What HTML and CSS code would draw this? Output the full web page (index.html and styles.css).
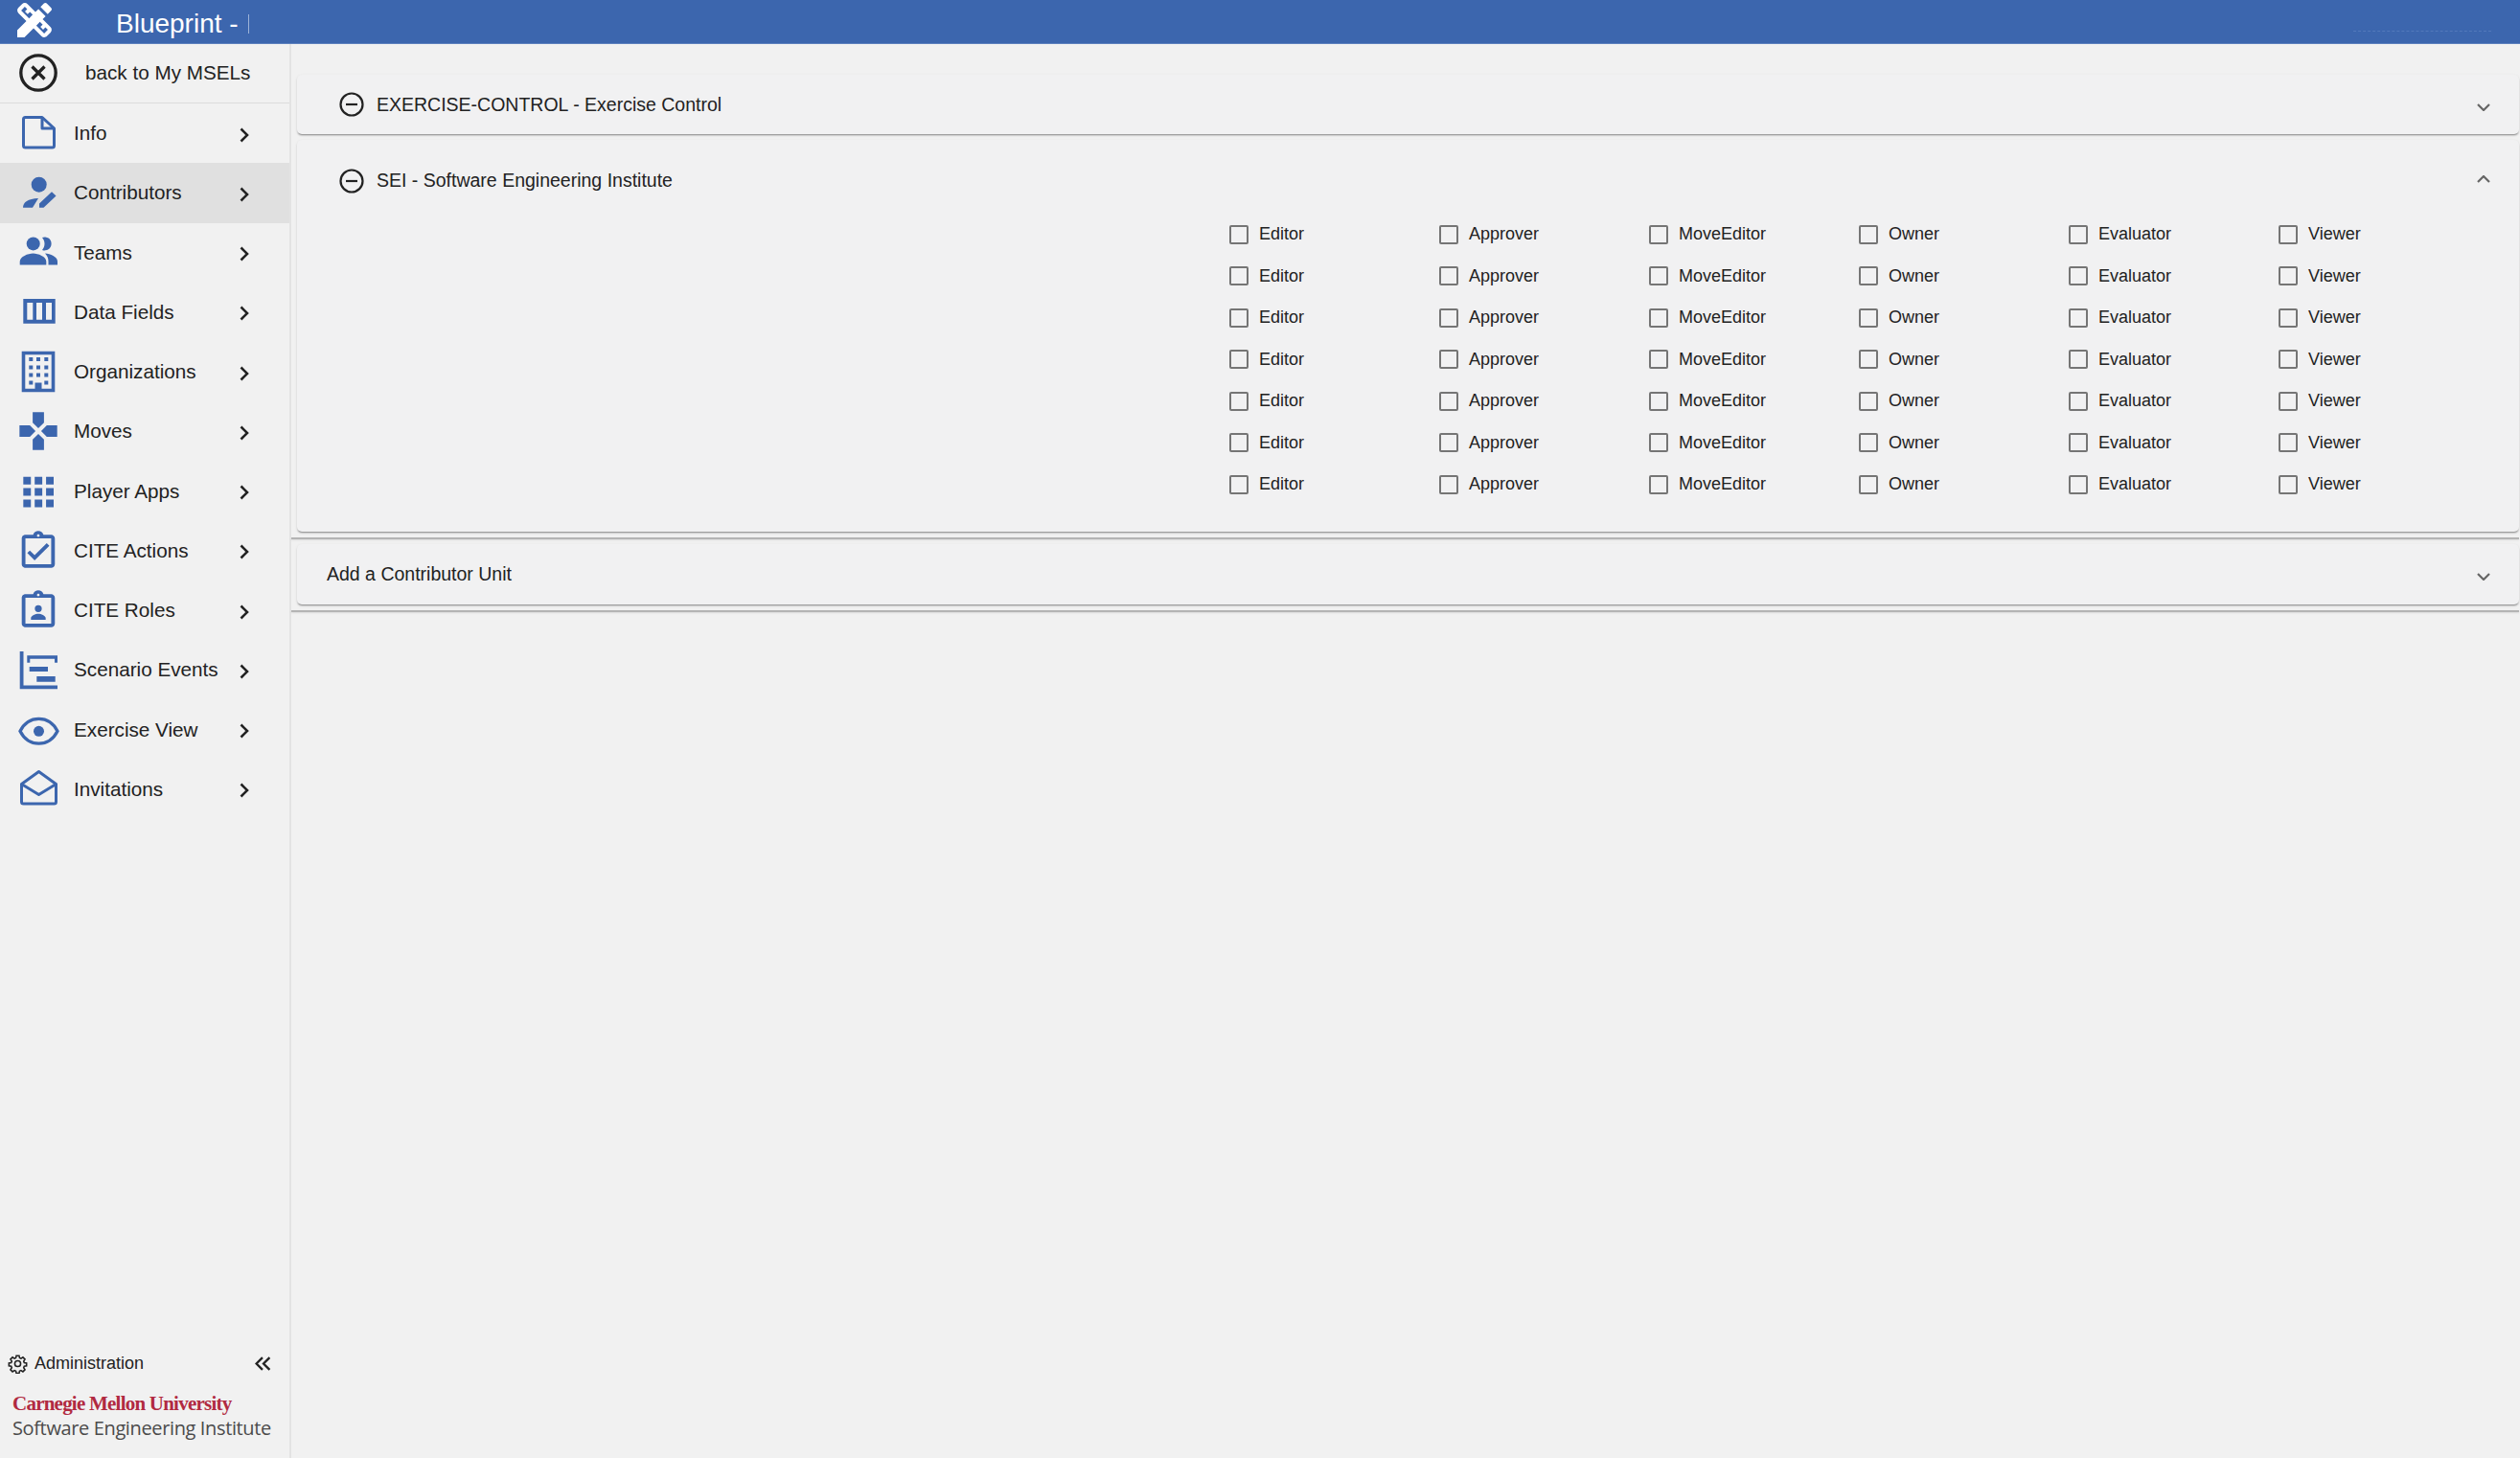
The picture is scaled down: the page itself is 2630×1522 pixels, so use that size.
FILE: index.html
```html
<!DOCTYPE html>
<html lang="en">
<head>
<meta charset="utf-8">
<title>Blueprint</title>
<link rel="stylesheet" href="styles.css">
</head>
<body>
<header class="topbar">
  <svg class="app-logo" viewBox="0 0 24 24"><path d="M16.24 11.51l1.57-1.57-3.75-3.75-1.57 1.57-4.14-4.13c-.78-.78-2.05-.78-2.83 0l-1.9 1.9c-.78.78-.78 2.05 0 2.83l4.13 4.13L3 17.25V21h3.75l4.76-4.76 4.13 4.13c.95.95 2.23.6 2.83 0l1.9-1.9c.78-.78.78-2.05 0-2.83l-4.13-4.13zm-7.06-.44L5.04 6.94l1.89-1.9L8.2 6.31 7.02 7.5l1.41 1.41 1.19-1.19 1.45 1.45-1.89 1.9zm7.88 7.89l-4.13-4.14 1.9-1.9 1.45 1.45-1.19 1.19 1.41 1.41 1.19-1.19 1.27 1.27-1.9 1.91zM20.71 7.04a.996.996 0 000-1.41l-2.34-2.34c-.47-.47-1.12-.29-1.41 0l-1.83 1.83 3.75 3.75 1.83-1.83z"/></svg>
  <span class="app-title">Blueprint -</span>
  <span class="caret"></span>
  <span class="faint-line"></span>
</header>
<div class="layout">
  <aside class="sidebar">
    <div class="back-row">
      <svg class="back-icon" viewBox="0 0 48 48"><circle cx="24" cy="24" r="18.2"/><path d="M17.5 17.5l13 13M30.5 17.5l-13 13"/></svg>
      <span>back to My MSELs</span>
    </div>
    <nav class="nav">
      <a class="nav-item"><svg class="nav-icon line" viewBox="0 0 48 48"><path d="M10.5 7.5H28L40.5 19V37a2 2 0 0 1-2 2H10.5a2 2 0 0 1-2-2V9.5a2 2 0 0 1 2-2Z"/><path d="M28 7.5V19H40.5"/></svg><span class="nav-label">Info</span><svg class="chev" viewBox="0 0 12 18"><path d="M2.5 2.5L9 9l-6.500 6.500"/></svg></a>
      <a class="nav-item active"><svg class="nav-icon" viewBox="0 0 48 48"><circle cx="24.700" cy="15.700" r="8"/><path d="M8 39.700c0-5.500 5-9.300 16-9.700l-6 9.700Z"/><path d="M25 39.800v-4.300l13-12.300 4.500 4.300-13 12.300Z"/></svg><span class="nav-label">Contributors</span><svg class="chev" viewBox="0 0 12 18"><path d="M2.500 2.500L9 9l-6.500 6.500"/></svg></a>
      <a class="nav-item"><svg class="nav-icon" viewBox="0 0 48 48"><circle cx="18.700" cy="14.400" r="7"/><path d="M28 7.900a7 7 0 1 1 0 13c1.600-2 2.500-4 2.500-6.500s-.9-4.500-2.500-6.500Z"/><path d="M4.700 36.400v-3.500c0-5 8.500-8.500 13.800-8.500s13.800 3.500 13.800 8.500v3.500Z"/><path d="M34.500 36.400v-3.500c0-3.500-1.500-6.300-3.500-8.300 5.500.500 13 3.500 13 8.300v3.500Z"/></svg><span class="nav-label">Teams</span><svg class="chev" viewBox="0 0 12 18"><path d="M2.500 2.500L9 9l-6.500 6.500"/></svg></a>
      <a class="nav-item"><svg class="nav-icon" viewBox="0 0 48 48"><path fill-rule="evenodd" d="M8.300 10H41.700V35.700H8.300ZM12.300 14V31.700H18.300V14ZM22 14V31.700H28V14ZM32 14V31.700H38V14Z"/></svg><span class="nav-label">Data Fields</span><svg class="chev" viewBox="0 0 12 18"><path d="M2.500 2.500L9 9l-6.500 6.500"/></svg></a>
      <a class="nav-item"><svg class="nav-icon" viewBox="0 0 48 48"><path fill-rule="evenodd" d="M6.700 2.700H41.300V45.300H6.700ZM10.300 6.300V41.700H20.500V35.500H27.500V41.700H37.700V6.300Z"/><path d="M14.300 9h4v4h-4ZM22 9h4v4h-4ZM30.300 9h4v4h-4ZM14.300 17.500h4v4h-4ZM22 17.500h4v4h-4ZM30.300 17.500h4v4h-4ZM14.300 25.500h4v4h-4ZM22 25.500h4v4h-4ZM30.300 25.500h4v4h-4ZM14.300 33.500h4v4h-4ZM30.300 33.500h4v4h-4Z"/></svg><span class="nav-label">Organizations</span><svg class="chev" viewBox="0 0 12 18"><path d="M2.500 2.500L9 9l-6.500 6.500"/></svg></a>
      <a class="nav-item"><svg class="nav-icon" viewBox="0 0 48 48"><path transform="translate(.4 .4) scale(1.967)" d="M15 7.500V2H9v5.500l3 3 3-3zM7.500 9H2v6h5.500l3-3-3-3zM9 16.500V22h6v-5.500l-3-3-3 3zM16.500 9l-3 3 3 3H22V9h-5.500z"/></svg><span class="nav-label">Moves</span><svg class="chev" viewBox="0 0 12 18"><path d="M2.500 2.500L9 9l-6.500 6.500"/></svg></a>
      <a class="nav-item"><svg class="nav-icon" viewBox="0 0 48 48"><path transform="translate(.4 .8) scale(1.98)" d="M4 8h4V4H4v4zm6 12h4v-4h-4v4zm-6 0h4v-4H4v4zm0-6h4v-4H4v4zm6 0h4v-4h-4v4zm6-10v4h4V4h-4zm-6 4h4V4h-4v4zm6 6h4v-4h-4v4zm0 6h4v-4h-4v4z"/></svg><span class="nav-label">Player Apps</span><svg class="chev" viewBox="0 0 12 18"><path d="M2.500 2.500L9 9l-6.500 6.500"/></svg></a>
      <a class="nav-item"><svg class="nav-icon" viewBox="0 0 48 48"><path transform="translate(.94 1.4) scale(1.92)" d="M18 9l-1.410-1.420L10 14.170l-2.590-2.580L6 13l4 4zm1-6h-4.180C14.400 1.840 13.300 1 12 1c-1.300 0-2.400.840-2.820 2H5c-.140 0-.270.010-.400.040-.390.080-.740.280-1.010.550-.180.180-.330.400-.430.640-.100.230-.160.490-.160.770v14c0 .270.060.540.160.780s.250.450.430.640c.270.270.620.470 1.010.550.130.020.260.030.400.030h14c1.100 0 2-.900 2-2V5c0-1.100-.900-2-2-2zm-7-.250c.410 0 .750.340.750.750s-.340.750-.750.750-.750-.340-.750-.750.340-.750.750-.750zM19 19H5V5h14v14z"/></svg><span class="nav-label">CITE Actions</span><svg class="chev" viewBox="0 0 12 18"><path d="M2.500 2.500L9 9l-6.500 6.500"/></svg></a>
      <a class="nav-item"><svg class="nav-icon" viewBox="0 0 48 48"><path transform="translate(.94 1.4) scale(1.92)" d="M19 3h-4.180C14.400 1.840 13.300 1 12 1c-1.300 0-2.400.840-2.820 2H5c-.140 0-.270.010-.400.040-.390.080-.740.280-1.010.550-.180.180-.330.400-.430.640-.100.230-.160.490-.160.770v14c0 .270.060.540.160.780s.250.450.430.640c.270.270.620.470 1.010.550.130.020.260.030.400.030h14c1.100 0 2-.900 2-2V5c0-1.100-.900-2-2-2zm-7-.250c.410 0 .750.340.750.750s-.340.750-.750.750-.750-.340-.750-.750.340-.750.750-.750zM19 19H5V5h14v14zM12 12.800a1.900 1.900 0 1 0 0-3.800 1.900 1.900 0 0 0 0 3.800zM8 17v-1c0-1.300 2.500-2.300 4-2.300s4 1 4 2.300v1z"/></svg><span class="nav-label">CITE Roles</span><svg class="chev" viewBox="0 0 12 18"><path d="M2.500 2.500L9 9l-6.500 6.500"/></svg></a>
      <a class="nav-item"><svg class="nav-icon" viewBox="0 0 48 48"><path d="M4.700 5H8.500V40.500H44V44.300H4.700ZM12.300 9.300H44V16.700H41V12.700H15.300V16.700H12.300ZM14.700 21H34V26H14.700ZM22.300 31H41.700V36.700H22.300Z"/></svg><span class="nav-label">Scenario Events</span><svg class="chev" viewBox="0 0 12 18"><path d="M2.500 2.500L9 9l-6.500 6.500"/></svg></a>
      <a class="nav-item"><svg class="nav-icon" viewBox="0 0 48 48"><path class="stroke" d="M5 25.300C10 15.500 17 12.400 24.500 12.400S39 15.500 44 25.300C39 35.100 32 38.200 24.500 38.200S10 35.100 5 25.300Z"/><circle cx="24.500" cy="25.300" r="5.500"/></svg><span class="nav-label">Exercise View</span><svg class="chev" viewBox="0 0 12 18"><path d="M2.500 2.500L9 9l-6.500 6.500"/></svg></a>
      <a class="nav-item"><svg class="nav-icon line" viewBox="0 0 48 48"><path d="M6.500 18.500L24.500 5.500L42.500 18.500V37a2 2 0 0 1-2 2H8.500a2 2 0 0 1-2-2Z"/><path d="M6.500 18.500L24.500 29.500L42.500 18.500"/></svg><span class="nav-label">Invitations</span><svg class="chev" viewBox="0 0 12 18"><path d="M2.500 2.500L9 9l-6.500 6.500"/></svg></a>
    </nav>
    <div class="side-footer">
      <div class="admin-row">
        <svg class="gear" viewBox="0 0 24 24"><path d="M10.300 2.500h3.400l.5 2.700 1.700.7 2.300-1.500 2.400 2.400-1.500 2.300.7 1.700 2.700.5v3.400l-2.700.5-.7 1.700 1.500 2.300-2.400 2.400-2.300-1.500-1.700.7-.5 2.700h-3.400l-.5-2.700-1.700-.7-2.300 1.500-2.400-2.400 1.500-2.300-.7-1.700-2.700-.5v-3.400l2.700-.5.700-1.700-1.500-2.300 2.400-2.400 2.300 1.500 1.700-.7Z"/><circle cx="12" cy="12" r="3.500"/></svg>
        <span class="admin-label">Administration</span>
        <svg class="collapse" viewBox="0 0 16 14"><path d="M7.500 1L1.500 7l6 6M14.500 1L8.500 7l6 6"/></svg>
      </div>
      <div class="org-logo">
        <div class="org-cmu">Carnegie Mellon University</div>
        <div class="org-sei">Software Engineering Institute</div>
      </div>
    </div>
  </aside>
  <main class="content">
    <section class="panel panel-first">
      <div class="panel-head">
        <svg class="minus" viewBox="0 0 26 26"><circle cx="13" cy="13" r="11.500"/><path d="M7 13h12"/></svg>
        <span class="panel-title">EXERCISE-CONTROL - Exercise Control</span>
        <svg class="toggle" viewBox="0 0 14 8"><path d="M1 1l6 6 6-6"/></svg>
      </div>
    </section>
    <section class="panel panel-open">
      <div class="panel-head tall">
        <svg class="minus" viewBox="0 0 26 26"><circle cx="13" cy="13" r="11.500"/><path d="M7 13h12"/></svg>
        <span class="panel-title">SEI - Software Engineering Institute</span>
        <svg class="toggle toggle-up" viewBox="0 0 14 8"><path d="M1 7l6-6 6 6"/></svg>
      </div>
      <div class="role-grid">
        <label class="role"><span class="cb"></span>Editor</label><label class="role"><span class="cb"></span>Approver</label><label class="role"><span class="cb"></span>MoveEditor</label><label class="role"><span class="cb"></span>Owner</label><label class="role"><span class="cb"></span>Evaluator</label><label class="role"><span class="cb"></span>Viewer</label>
        <label class="role"><span class="cb"></span>Editor</label><label class="role"><span class="cb"></span>Approver</label><label class="role"><span class="cb"></span>MoveEditor</label><label class="role"><span class="cb"></span>Owner</label><label class="role"><span class="cb"></span>Evaluator</label><label class="role"><span class="cb"></span>Viewer</label>
        <label class="role"><span class="cb"></span>Editor</label><label class="role"><span class="cb"></span>Approver</label><label class="role"><span class="cb"></span>MoveEditor</label><label class="role"><span class="cb"></span>Owner</label><label class="role"><span class="cb"></span>Evaluator</label><label class="role"><span class="cb"></span>Viewer</label>
        <label class="role"><span class="cb"></span>Editor</label><label class="role"><span class="cb"></span>Approver</label><label class="role"><span class="cb"></span>MoveEditor</label><label class="role"><span class="cb"></span>Owner</label><label class="role"><span class="cb"></span>Evaluator</label><label class="role"><span class="cb"></span>Viewer</label>
        <label class="role"><span class="cb"></span>Editor</label><label class="role"><span class="cb"></span>Approver</label><label class="role"><span class="cb"></span>MoveEditor</label><label class="role"><span class="cb"></span>Owner</label><label class="role"><span class="cb"></span>Evaluator</label><label class="role"><span class="cb"></span>Viewer</label>
        <label class="role"><span class="cb"></span>Editor</label><label class="role"><span class="cb"></span>Approver</label><label class="role"><span class="cb"></span>MoveEditor</label><label class="role"><span class="cb"></span>Owner</label><label class="role"><span class="cb"></span>Evaluator</label><label class="role"><span class="cb"></span>Viewer</label>
        <label class="role"><span class="cb"></span>Editor</label><label class="role"><span class="cb"></span>Approver</label><label class="role"><span class="cb"></span>MoveEditor</label><label class="role"><span class="cb"></span>Owner</label><label class="role"><span class="cb"></span>Evaluator</label><label class="role"><span class="cb"></span>Viewer</label>
      </div>
    </section>
    <div class="rule"></div>
    <section class="panel panel-add">
      <div class="panel-head head-add">
        <span class="panel-title add-title">Add a Contributor Unit</span>
        <svg class="toggle" viewBox="0 0 14 8"><path d="M1 1l6 6 6-6"/></svg>
      </div>
    </section>
    <div class="rule"></div>
  </main>
</div>
</body>
</html>
```
FILE: styles.css
```css
* { box-sizing: border-box; }
html, body { margin: 0; height: 100%; }
body {
  display: flex;
  flex-direction: column;
  height: 100vh;
  overflow: hidden;
  background: #f1f1f1;
  color: #222;
  font-family: "Liberation Sans", Arial, sans-serif;
}

.topbar {
  flex: none;
  height: 46px;
  overflow: hidden;
  display: flex;
  align-items: center;
  background: #3c66ae;
  border-bottom: 1px solid #5c80bd;
  color: #fff;
  padding-left: 12px;
}
.app-logo { width: 48px; height: 48px; fill: #fff; flex: none; margin-top: -3px; }
.app-title { font-size: 28px; line-height: 32px; margin-left: 61px; margin-top: 5px; }
.caret { width: 1px; height: 20px; background: #9db3d8; margin-left: 10px; margin-top: 4px; }
.faint-line { width: 144px; margin-left: auto; margin-right: 30px; margin-top: 19px; border-top: 1px dashed #5279bb; }

.layout { flex: 1; display: flex; min-height: 0; }

.sidebar {
  flex: 0 0 304px;
  display: flex;
  flex-direction: column;
  border-right: 2px solid #e3e3e3;
}
.back-row {
  flex: 0 0 62px;
  display: flex;
  align-items: center;
  padding-left: 16px;
  padding-bottom: 2px;
  border-bottom: 1px solid #dcdcdc;
  font-size: 20.7px;
}
.back-row span { margin-left: 25px; }
.back-icon { width: 48px; height: 48px; flex: none; fill: none; stroke: #222; stroke-width: 3.300; }

.nav { display: flex; flex-direction: column; }
.nav-item {
  height: 62.25px;
  display: flex;
  align-items: center;
  padding-left: 16px;
  font-size: 20.7px;
}
.nav-item.active { background: #e0e0e0; }
.nav-icon { width: 48px; height: 48px; flex: none; fill: #3c66ae; }
.nav-icon.line { fill: none; stroke: #3c66ae; stroke-width: 3; stroke-linejoin: round; }
.nav-icon .stroke { fill: none; stroke: #3c66ae; stroke-width: 3.300; }
.nav-label { margin-left: 13px; flex: 1; }
.chev { width: 12px; height: 18px; flex: none; margin-right: 41px; margin-top: 3px; fill: none; stroke: #222; stroke-width: 2.600; }

.side-footer { margin-top: auto; }
.admin-row {
  display: flex;
  align-items: center;
  height: 32px;
  padding-left: 8px;
  margin-bottom: 14px;
  font-size: 18px;
}
.gear { width: 21px; height: 21px; flex: none; fill: none; stroke: #222; stroke-width: 1.800; }
.admin-label { margin-left: 7px; }
.collapse { width: 17px; height: 15px; margin-left: auto; margin-right: 19px; fill: none; stroke: #222; stroke-width: 2.200; }
.org-logo { padding-left: 13px; padding-bottom: 19px; }
.org-cmu {
  font-family: "Liberation Serif", "Times New Roman", serif;
  font-weight: 700;
  font-size: 21px;
  line-height: 25px;
  letter-spacing: -0.77px;
  color: #b12a41;
}
.org-sei {
  font-family: "Open Sans", sans-serif;
  font-size: 20px;
  line-height: 25px;
  letter-spacing: -0.37px;
  color: #4b4b4b;
}

.content { flex: 1; min-width: 0; padding-top: 32px; padding-right: 1px; }

.panel {
  margin-left: 6px;
  background: #f1f1f2;
  border-radius: 5px;
  box-shadow: 0 2px 2px -1px rgba(0,0,0,.4), 0 1px 3px rgba(0,0,0,.1);
}
.panel-first { margin-bottom: 6px; }
.panel-head { display: flex; align-items: center; height: 62px; padding-left: 44px; font-size: 19.5px; }
.panel-head.tall { height: 85px; }
.panel-head.head-add { height: 63px; }
.panel-open { height: 409px; }
.minus { width: 26px; height: 26px; flex: none; fill: none; stroke: #222; stroke-width: 2.200; }
.panel-title { margin-left: 13px; }
.add-title { margin-left: -13px; }
.toggle { width: 14px; height: 8px; margin-left: auto; margin-right: 30px; margin-top: 5px; fill: none; stroke: #666; stroke-width: 2.200; }
.toggle.toggle-up { margin-top: -4px; }

.role-grid {
  display: grid;
  grid-template-columns: repeat(6, 219px);
  grid-auto-rows: 43.5px;
  margin-left: 973px;
  margin-top: -8px;
}
.role { display: flex; align-items: center; font-size: 18px; }
.cb { width: 20px; height: 20px; flex: none; margin-right: 11px; border: 2px solid #757575; border-radius: 2px; }

.rule { height: 2px; margin: 6px 0 5px; background: #b4b4b4; box-shadow: 0 1px 2px rgba(0,0,0,.1); }
```
